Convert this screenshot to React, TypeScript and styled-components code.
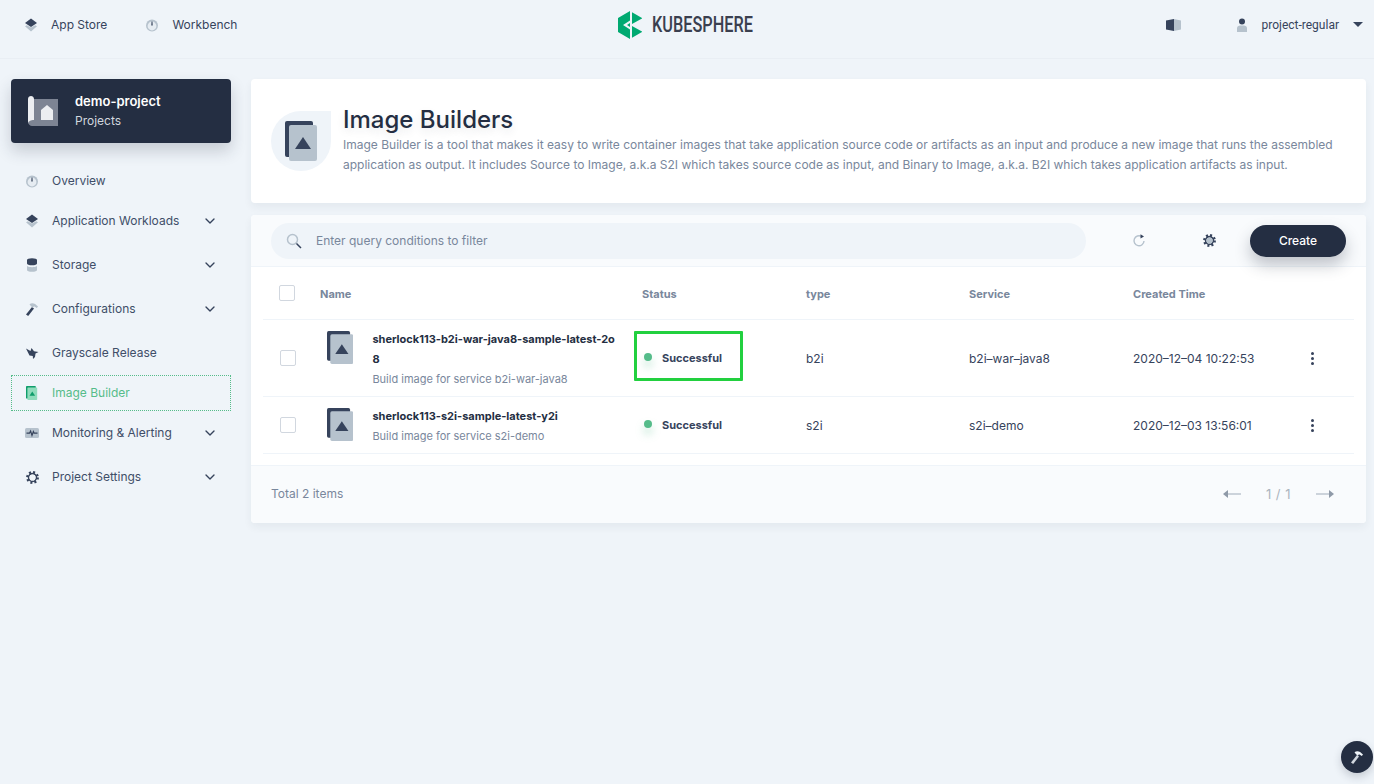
import styled, { createGlobalStyle } from 'styled-components';
import { ChevronDown } from 'lucide-react';

const DARK = '#36435c';
const LIGHT = '#b6c2cd';
const GREEN = '#55bc8a';

const GlobalStyle = createGlobalStyle`
   html, body {
      margin: 0;
      padding: 0;
      background: #eff4f9;
      font-family: Inter, 'Noto Sans', sans-serif;
      font-size: 12px;
      color: #36435c;
   }
   * {
      box-sizing: border-box;
   }
`;

const Page = styled.div`
   min-height: 784px;
   overflow: hidden;
`;

const Header = styled.header`
   display: grid;
   grid-template-columns: 1fr auto 1fr;
   align-items: center;
   height: 59px;
   padding: 0 11px 9px 23px;
   border-bottom: 1px solid #e9eef4;
`;

const HeaderLeft = styled.nav`
   display: flex;
   align-items: center;
   gap: 37px;
`;

const HeaderLink = styled.div`
   display: flex;
   align-items: center;
   gap: 12px;
   font-size: 12px;
   color: ${DARK};
`;

const Logo = styled.div`
   display: flex;
   align-items: center;
   gap: 10px;
   margin-left: -16px;
`;

const LogoText = styled.span`
   display: inline-block;
   width: 100px;
   font-family: Roboto, sans-serif;
   font-size: 22px;
   font-weight: 500;
   line-height: 28px;
   white-space: nowrap;
   color: #3a3f4f;
   transform: scaleX(0.74);
   transform-origin: left center;
`;

const HeaderRight = styled.div`
   display: flex;
   justify-content: flex-end;
   align-items: center;
`;

const UserName = styled.span`
   margin: 0 14px 0 12px;
   font-family: Roboto, sans-serif;
   font-size: 12px;
   color: ${DARK};
`;

const UserIcon = styled.span`
   display: flex;
   margin-left: 53px;
`;

const Caret = styled.span`
   width: 0;
   height: 0;
   border-left: 5px solid transparent;
   border-right: 5px solid transparent;
   border-top: 5px solid ${DARK};
`;

const Body = styled.div`
   display: flex;
   gap: 20px;
   padding: 20px 8px 0 11px;
`;

const Sidebar = styled.aside`
   flex: 0 0 220px;
`;

const ProjectCard = styled.div`
   display: flex;
   align-items: center;
   gap: 17px;
   height: 64px;
   margin-bottom: 20px;
   padding-left: 17px;
   border-radius: 4px;
   background: #242e42;
   box-shadow: 0 8px 16px rgba(36, 46, 66, 0.2);
`;

const ProjectName = styled.div`
   font-size: 13px;
   font-weight: 600;
   line-height: 20px;
   color: #fff;
`;

const ProjectKind = styled.div`
   line-height: 20px;
   color: #d1d7df;
`;

const NavItem = styled.div<{ $expandable?: boolean; $active?: boolean }>`
   display: flex;
   align-items: center;
   height: 36px;
   margin-bottom: ${({ $expandable }) => ($expandable ? '8px' : '4px')};
   padding: 0 12px 0 12px;
   gap: 12px;
   border: 1px dotted ${({ $active }) => ($active ? GREEN : 'transparent')};
   color: ${({ $active }) => ($active ? GREEN : '#404e68')};
   font-size: 12px;
   line-height: 20px;
`;

const NavLabel = styled.span`
   flex: 1;
   white-space: nowrap;
`;

const Main = styled.main`
   flex: 1;
   min-width: 0;
`;

const Banner = styled.section`
   display: flex;
   align-items: center;
   gap: 12px;
   height: 124px;
   margin-bottom: 12px;
   padding: 0 20px;
   border-radius: 4px;
   background: #fff;
   box-shadow: 0 4px 8px rgba(36, 46, 66, 0.06);
`;

const BannerIcon = styled.div`
   flex: 0 0 60px;
   display: flex;
   justify-content: center;
   align-items: center;
   height: 60px;
   border-radius: 50% 0 50% 50%;
   background: #eff4f9;
`;

const Title = styled.h1`
   margin: 0;
   font-size: 24px;
   font-weight: 500;
   line-height: 32px;
   color: #242e42;
   text-shadow: 0 4px 8px rgba(36, 46, 66, 0.1);
`;

const Description = styled.p`
   margin: -1px 0 4px;
   font-size: 12px;
   line-height: 20px;
   color: #79879c;
`;

const Card = styled.section`
   border-radius: 4px;
   background: #fff;
   box-shadow: 0 4px 8px rgba(36, 46, 66, 0.06);
`;

const Toolbar = styled.div`
   display: flex;
   align-items: center;
   height: 52px;
   padding: 0 20px;
   border-bottom: 1px solid #eff4f9;
   background: #f9fbfd;
   border-radius: 4px 4px 0 0;
`;

const SearchBox = styled.div`
   display: flex;
   align-items: center;
   gap: 14px;
   width: 815px;
   height: 36px;
   padding-left: 15px;
   border-radius: 18px;
   background: #eff4f9;
   color: #79879c;
`;

const ToolIcon = styled.span<{ $left: number }>`
   display: flex;
   margin-left: ${({ $left }) => $left}px;
`;

const CreateButton = styled.button`
   width: 96px;
   height: 32px;
   margin-left: 34px;
   border: 0;
   border-radius: 16px;
   background: #242e42;
   box-shadow: 0 8px 16px rgba(35, 45, 65, 0.28);
   color: #fff;
   font-family: inherit;
   font-size: 12px;
   font-weight: 500;
`;

const Table = styled.div`
   padding: 0 12px;
`;

const Row = styled.div<{ $head?: boolean }>`
   display: grid;
   grid-template-columns: 57px 322px 164px 163px 164px 171px 1fr;
   align-items: center;
   padding: ${({ $head }) => ($head ? '0' : '8px 0')};
   height: ${({ $head }) => ($head ? '53px' : 'auto')};
   border-bottom: 1px solid #eff4f9;
`;

const HeadCell = styled.div`
   margin-top: 1px;
   font-size: 11px;
   font-weight: 700;
   color: #79879c;
`;

const CheckBox = styled.span<{ $head?: boolean }>`
   display: block;
   width: 16px;
   height: 16px;
   margin-left: ${({ $head }) => ($head ? '16px' : '17px')};
   border: 1px solid #d1d7df;
   border-radius: 2px;
   background: #fff;
`;

const NameCell = styled.div`
   display: flex;
   align-items: flex-start;
   gap: 19px;
   margin-bottom: -1px;
   padding: 1px 24px 0 7px;
`;

const RowIcon = styled.span`
   flex: none;
   display: flex;
   margin-top: 2px;
`;

const ItemName = styled.div`
   font-size: 11px;
   font-weight: 700;
   line-height: 20px;
   color: #242e42;
   word-break: break-all;
`;

const ItemDesc = styled.div`
   font-size: 11px;
   line-height: 20px;
   color: #79879c;
`;

const Status = styled.div`
   display: flex;
   align-items: center;
   gap: 10px;
   padding-left: 2px;
   font-size: 11px;
   font-weight: 700;
   color: ${DARK};
`;

const Dot = styled.span`
   width: 8px;
   height: 8px;
   margin-top: -2px;
   border-radius: 50%;
   background: ${GREEN};
   box-shadow: 0 6px 8px rgba(85, 188, 138, 0.36);
`;

const Plain = styled.div`
   font-size: 12px;
   color: ${DARK};
`;

const MenuDots = styled.div`
   display: flex;
   flex-direction: column;
   align-items: center;
   gap: 2px;
   width: 16px;
   span {
      width: 3px;
      height: 3px;
      border-radius: 50%;
      background: ${DARK};
   }
`;

const Footer = styled.div`
   display: flex;
   align-items: center;
   justify-content: space-between;
   height: 58px;
   margin-top: 11px;
   padding: 0 32px 2px 20px;
   border-top: 1px solid #eff4f9;
   border-radius: 0 0 4px 4px;
   background: #f9fbfd;
   color: #79879c;
`;

const Pager = styled.div`
   display: flex;
   align-items: center;
   gap: 25px;
   color: #abb4be;
   font-size: 13px;
   letter-spacing: 0.5px;
`;

const Highlight = styled.div`
   position: absolute;
   left: 634px;
   top: 331px;
   width: 109px;
   height: 50px;
   border: 3px solid #22d03f;
   border-radius: 1px;
`;

const FloatButton = styled.div`
   position: fixed;
   right: 1px;
   bottom: 11px;
   display: flex;
   justify-content: center;
   align-items: center;
   width: 32px;
   height: 32px;
   border-radius: 50%;
   background: #242e42;
   box-shadow: 0 4px 8px rgba(36, 46, 66, 0.2);
`;

const IconSlot = styled.span`
   flex: 0 0 16px;
   display: flex;
   justify-content: center;
`;

type IconProps = { dark?: string; light?: string };

const StackIcon = ({ dark = DARK, light = LIGHT }: IconProps) => (
   <svg width='16' height='16' viewBox='0 0 16 16'>
      <path d='M2 9.2 3.8 8.2 8 10.5 12.2 8.2 14 9.2 8 14.5Z' fill={light} />
      <path d='M8 1.5 14 6 8 10 2 6Z' fill={dark} />
   </svg>
);

const DialIcon = () => (
   <svg width='16' height='16' viewBox='0 0 16 16'>
      <circle cx='8' cy='8.5' r='6' fill={LIGHT} />
      <circle cx='8' cy='9' r='4.4' fill='#e6ecf2' />
      <path d='M7.5 4.5h1l.2 4H7.3Z' fill={DARK} />
   </svg>
);

const StorageIcon = () => (
   <svg width='16' height='16' viewBox='0 0 16 16'>
      <path d='M3 3c0-1 2-1.8 5-1.8s5 .8 5 1.8v3.4c0 1-2 1.8-5 1.8s-5-.8-5-1.8Z' fill={DARK} />
      <path d='M3 9c1 .8 3 1.2 5 1.2s4-.4 5-1.2v4c0 1-2 1.8-5 1.8s-5-.8-5-1.8Z' fill={LIGHT} />
   </svg>
);

const HammerIcon = ({ dark = DARK, light = LIGHT }: IconProps) => (
   <svg width='16' height='16' viewBox='0 0 16 16'>
      <path d='M8 6 10 7.6 4.2 15 2 13.4Z' fill={dark} />
      <path d='M5.5 3.2C8 1.2 11 2 14 5.6L12.8 7 10 5.2 8.8 6.8 6.8 5Z' fill={light} />
   </svg>
);

const BirdIcon = () => (
   <svg width='16' height='16' viewBox='0 0 16 16'>
      <path d='M2 3.5 6.5 6 7.5 3 10 6.2 14.5 7 11.5 8.6 11 12 9 14 8.8 11 5.5 10.5Z' fill={DARK} />
   </svg>
);

const BuilderIcon = ({ dark = DARK, light = LIGHT, size = 40 }: IconProps & { size?: number }) => (
   <svg width={size * 0.8} height={size} viewBox='0 0 32 40'>
      <rect x='0' y='0' width='28' height='36' rx='2' fill={dark} />
      <rect x='4' y='4' width='28' height='36' rx='2' fill={light} />
      <path d='M18 16 26 28H10Z' fill={dark} />
   </svg>
);

const MonitorIcon = () => (
   <svg width='16' height='16' viewBox='0 0 16 16'>
      <rect x='1' y='3' width='14' height='10' rx='1.5' fill={LIGHT} />
      <path d='M2.5 8.2H5.5L6.6 6 8 10.4 9.4 6.6 10.2 8.2H13.5' fill='none' stroke={DARK} strokeWidth='1.2' />
   </svg>
);

const GearIcon = ({ center = '#eff4f9' }: { center?: string }) => (
   <svg width='13' height='13' viewBox='0 0 16 16'>
      <circle cx='8' cy='8' r='6.4' fill='none' stroke={DARK} strokeWidth='3' strokeDasharray='2.4 2.62' />
      <circle cx='8' cy='8' r='4.8' fill='none' stroke={DARK} strokeWidth='2' />
      <circle cx='8' cy='8' r='3.8' fill={center} />
   </svg>
);

const NAV_ITEMS = [
   { label: 'Overview', icon: <DialIcon /> },
   { label: 'Application Workloads', icon: <StackIcon />, expandable: true },
   { label: 'Storage', icon: <StorageIcon />, expandable: true },
   { label: 'Configurations', icon: <HammerIcon />, expandable: true },
   { label: 'Grayscale Release', icon: <BirdIcon /> },
   { label: 'Image Builder', icon: <BuilderIcon size={14} dark='#0f9d6b' light='#8fdcbc' />, active: true },
   { label: 'Monitoring & Alerting', icon: <MonitorIcon />, expandable: true },
   { label: 'Project Settings', icon: <GearIcon />, expandable: true },
];

const BUILDERS = [
   {
      name: 'sherlock113-b2i-war-java8-sample-latest-2o8',
      desc: 'Build image for service b2i-war-java8',
      type: 'b2i',
      service: 'b2i–war–java8',
      created: '2020–12–04 10:22:53',
   },
   {
      name: 'sherlock113-s2i-sample-latest-y2i',
      desc: 'Build image for service s2i-demo',
      type: 's2i',
      service: 's2i–demo',
      created: '2020–12–03 13:56:01',
   },
];

const App = () => {
   return (
      <Page>
         <GlobalStyle />
         <Header>
            <HeaderLeft>
               <HeaderLink>
                  <StackIcon />
                  App Store
               </HeaderLink>
               <HeaderLink>
                  <DialIcon />
                  Workbench
               </HeaderLink>
            </HeaderLeft>
            <Logo>
               <svg width='24' height='28' viewBox='0 0 24 28'>
                  <path d='M12 0V9.5L5 14 12 18.5V28L0 21V7Z' fill='#00a971' />
                  <path d='M14 1.2 24 7V7.6L14 13Z' fill='#00a971' />
                  <path d='M14 15 24 20.4V21L14 26.8Z' fill='#00a971' />
                  <path d='M9 14 12 12V16Z' fill='#00a971' />
               </svg>
               <LogoText>KUBESPHERE</LogoText>
            </Logo>
            <HeaderRight>
               <svg width='15' height='12' viewBox='0 0 15 12'>
                  <path d='M0 1.5 8 0V12L0 10.5Z' fill={DARK} />
                  <path d='M8 0 15 1.5V10.5L8 12Z' fill={LIGHT} />
               </svg>
               <UserIcon>
                  <svg width='16' height='16' viewBox='0 0 16 16'>
                     <circle cx='8' cy='4.5' r='3' fill={DARK} />
                     <path d='M3 15V11C3 9 5 8.5 8 8.5S13 9 13 11V15Z' fill={LIGHT} />
                  </svg>
               </UserIcon>
               <UserName>project-regular</UserName>
               <Caret />
            </HeaderRight>
         </Header>
         <Body>
            <Sidebar>
               <ProjectCard>
                  <svg width='30' height='30' viewBox='0 0 30 30'>
                     <path d='M6 3H30V30H4C2 30 0 28 0 26Z' fill='#7d8493' />
                     <path d='M0 3C0 1 1.5 0 3 0S6 1 6 3V24C3 24 0 25 0 28Z' fill='#eceef1' />
                     <path d='M13 14 19 9 25 14V24H13Z' fill='#eceef1' />
                  </svg>
                  <div>
                     <ProjectName>demo-project</ProjectName>
                     <ProjectKind>Projects</ProjectKind>
                  </div>
               </ProjectCard>
               {NAV_ITEMS.map((item) => (
                  <NavItem key={item.label} $expandable={item.expandable} $active={item.active}>
                     <IconSlot>{item.icon}</IconSlot>
                     <NavLabel>{item.label}</NavLabel>
                     {item.expandable && <ChevronDown size={16} color={DARK} />}
                  </NavItem>
               ))}
            </Sidebar>
            <Main>
               <Banner>
                  <BannerIcon>
                     <BuilderIcon size={40} />
                  </BannerIcon>
                  <div>
                     <Title>Image Builders</Title>
                     <Description>
                        Image Builder is a tool that makes it easy to write container images that take application source code or artifacts as an input and produce a new image that runs the assembled application as output. It includes Source to Image, a.k.a S2I which takes source code as input, and Binary to Image, a.k.a. B2I which takes application artifacts as input.
                     </Description>
                  </div>
               </Banner>
               <Card>
                  <Toolbar>
                     <SearchBox>
                        <svg width='16' height='16' viewBox='0 0 16 16'>
                           <circle cx='6.5' cy='6.5' r='5' fill='none' stroke={LIGHT} strokeWidth='1.5' />
                           <path d='M10.5 10.5 15 15' stroke={DARK} strokeWidth='1.5' />
                        </svg>
                        Enter query conditions to filter
                     </SearchBox>
                     <ToolIcon $left={46}>
                        <svg width='14' height='14' viewBox='0 0 14 14'>
                           <path d='M9.5 2.4A5 5 0 1 0 12 7' fill='none' stroke={LIGHT} strokeWidth='1.4' />
                           <path d='M8.5 .2 12 2.6 8.5 4.6Z' fill={DARK} />
                        </svg>
                     </ToolIcon>
                     <ToolIcon $left={57}>
                        <GearIcon center={LIGHT} />
                     </ToolIcon>
                     <CreateButton>Create</CreateButton>
                  </Toolbar>
                  <Table>
                     <Row $head>
                        <CheckBox $head />
                        <HeadCell>Name</HeadCell>
                        <HeadCell>Status</HeadCell>
                        <HeadCell>type</HeadCell>
                        <HeadCell>Service</HeadCell>
                        <HeadCell>Created Time</HeadCell>
                     </Row>
                     {BUILDERS.map((builder) => (
                        <Row key={builder.name}>
                           <CheckBox />
                           <NameCell>
                              <RowIcon>
                                 <BuilderIcon size={33} />
                              </RowIcon>
                              <div>
                                 <ItemName>{builder.name}</ItemName>
                                 <ItemDesc>{builder.desc}</ItemDesc>
                              </div>
                           </NameCell>
                           <Status>
                              <Dot />
                              Successful
                           </Status>
                           <Plain>{builder.type}</Plain>
                           <Plain>{builder.service}</Plain>
                           <Plain>{builder.created}</Plain>
                           <MenuDots>
                              <span />
                              <span />
                              <span />
                           </MenuDots>
                        </Row>
                     ))}
                  </Table>
                  <Footer>
                     <span>Total 2 items</span>
                     <Pager>
                        <svg width='18' height='8' viewBox='0 0 18 8'>
                           <path d='M0 4 5 0V8Z' fill='#8f9aa8' />
                           <path d='M5 3H18V5H5Z' fill='#ccd3db' />
                        </svg>
                        <span>1 / 1</span>
                        <svg width='18' height='8' viewBox='0 0 18 8'>
                           <path d='M18 4 13 0V8Z' fill='#8f9aa8' />
                           <path d='M0 3H13V5H0Z' fill='#ccd3db' />
                        </svg>
                     </Pager>
                  </Footer>
               </Card>
            </Main>
         </Body>
         <Highlight />
         <FloatButton>
            <HammerIcon dark='#d1d7df' light='#eff4f9' />
         </FloatButton>
      </Page>
   );
};

export default App;
